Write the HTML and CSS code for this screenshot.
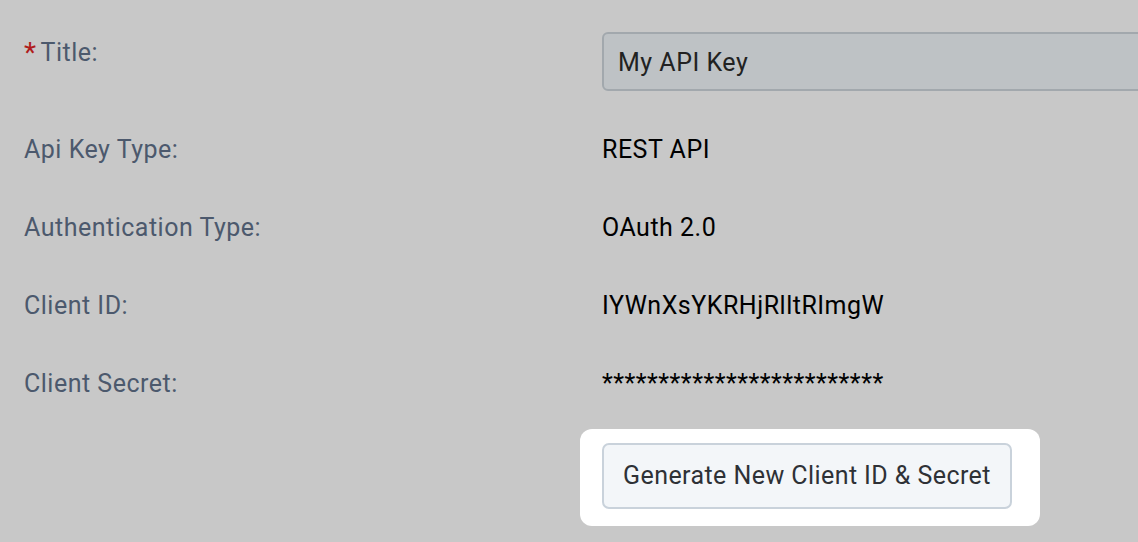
FILE: index.html
```html
<!DOCTYPE html>
<html lang="en">
<head>
<meta charset="utf-8">
<title>API Key</title>
<link rel="stylesheet" href="styles.css">
</head>
<body>
<div class="form">
  <div class="row row-title">
    <div class="label label-title"><span class="req">*</span>Title:</div>
    <div class="value value-clip"><div class="input">My API Key</div></div>
  </div>
  <div class="row row-first">
    <div class="label">Api Key Type:</div>
    <div class="value">REST API</div>
  </div>
  <div class="row">
    <div class="label">Authentication Type:</div>
    <div class="value">OAuth 2.0</div>
  </div>
  <div class="row">
    <div class="label">Client ID:</div>
    <div class="value">IYWnXsYKRHjRlltRImgW</div>
  </div>
  <div class="row">
    <div class="label">Client Secret:</div>
    <div class="value">*************************</div>
  </div>
  <div class="row row-action">
    <div class="label"></div>
    <div class="value">
      <div class="highlight"><button class="btn" type="button">Generate New Client ID &amp; Secret</button></div>
    </div>
  </div>
</div>
</body>
</html>
```

FILE: styles.css
```css
html, body {
  margin: 0;
  padding: 0;
  background: #c8c8c8;
  overflow: hidden;
  width: 1138px;
  height: 542px;
}

body {
  font-family: Roboto, "Liberation Sans", sans-serif;
  font-size: 25px;
  line-height: 30px;
  letter-spacing: 0.5px;
}

.form {
  padding: 32px 0 0 24px;
}

.row {
  display: grid;
  grid-template-columns: 578px 536px;
  align-items: start;
  margin-top: 48px;
}

.row-title {
  margin-top: 0;
}

.row-first {
  margin-top: 44px;
}

.row-action {
  margin-top: 30px;
}

.label {
  color: #4c596d;
  white-space: nowrap;
}

.label-title {
  padding-top: 5px;
}

.req {
  color: #b01c1c;
  font-size: 28px;
  margin-right: 4px;
  position: relative;
  top: 1px;
}

.value {
  color: #000;
  white-space: nowrap;
}

.value-clip {
  overflow: hidden;
}

.input {
  width: 580px;
  box-sizing: border-box;
  height: 59px;
  padding: 14px 14px 11px 14px;
  border: 2px solid #a2a8ad;
  border-radius: 6px;
  background: #bec2c5;
  color: #222;
}

.highlight {
  display: inline-block;
  background: #fff;
  border-radius: 12px;
  padding: 14px 28px 17px 22px;
  margin-left: -22px;
}

.btn {
  display: block;
  font-family: Roboto, "Liberation Sans", sans-serif;
  font-size: 25px;
  letter-spacing: 0.43px;
  line-height: 30px;
  color: #2e3136;
  background: #f3f6f9;
  border: 2px solid #c9d2db;
  border-radius: 7px;
  padding: 16px 19px;
  margin: 0;
}
```
